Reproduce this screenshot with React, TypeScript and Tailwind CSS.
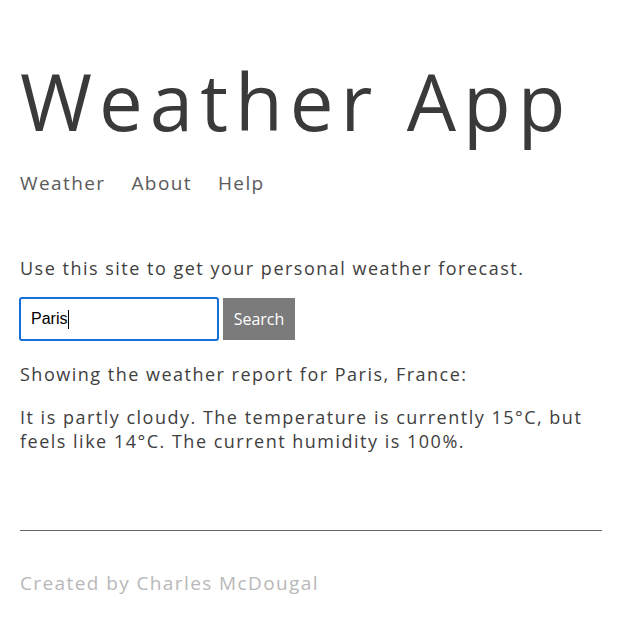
import React from "react";

export default function App() {
  return (
    <div className="min-h-screen bg-white px-5 font-['Open_Sans',sans-serif] text-[#3a3a3a]">
      <header className="pt-[61px]">
        <h1 className="text-[78px] leading-[80px] tracking-[7px] text-[#3a3a3a]">Weather App</h1>
        <nav className="mt-[30px] flex gap-[26px] text-[19px] leading-[24px] tracking-[1.4px] text-[#5a5a5a]">
          <a>Weather</a>
          <a>About</a>
          <a>Help</a>
        </nav>
      </header>
      <main className="mt-[61px] text-[18px] leading-[24px] text-[#404040]">
        <p className="tracking-[1.5px]">Use this site to get your personal weather forecast.</p>
        <div className="-ml-px mt-[17px] flex items-center gap-1">
          <div className="flex h-[44px] w-[200px] items-center rounded-[3px] border-2 border-[#1a6ed8] pl-[10px] font-['Liberation_Sans',sans-serif] text-[16px] text-black">
            <span>Paris</span>
            <span className="ml-px h-[19px] w-px bg-black" />
          </div>
          <div className="flex h-[42px] w-[72px] items-center justify-center bg-[#7b7b7b] font-['Open_Sans',sans-serif] text-[16px] text-white">
            Search
          </div>
        </div>
        <p className="mt-[21px] tracking-[1.5px]">Showing the weather report for Paris, France:</p>
        <p className="mt-[19px] tracking-[1.5px]">
          It is partly cloudy. The temperature is currently 15°C, but feels like 14°C. The current humidity is 100%.
        </p>
      </main>
      <footer className="mt-[77px] border-t border-[#666] pt-[40px] text-[19px] leading-[24px] tracking-[1.4px] text-[#b8b8b8]">
        Created by Charles McDougal
      </footer>
    </div>
  );
}
